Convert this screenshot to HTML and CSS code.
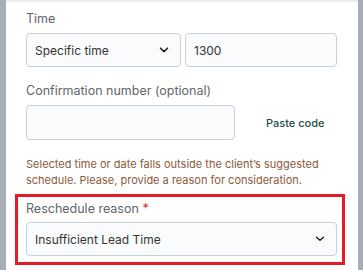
FILE: index.html
```html
<!DOCTYPE html>
<html lang="en">
<head>
    <meta charset="UTF-8">
    <meta name="viewport" content="width=device-width, initial-scale=1.0">
    <title>Reschedule</title>
    <link rel="stylesheet" href="styles.css">
</head>
<body>

<div class="panel">
    <div class="field">
        <label class="label">Time</label>
        <div class="row">
            <div class="select">
                <span>Specific time</span>
                <svg class="chevron" width="10" height="6" viewBox="0 0 10 6"><path d="M1.5 1.2 L5 4.6 L8.5 1.2" fill="none" stroke="#222" stroke-width="1.6" stroke-linecap="round" stroke-linejoin="round"/></svg>
            </div>
            <div class="input">1300</div>
        </div>
    </div>

    <div class="field">
        <label class="label">Confirmation number (optional)</label>
        <div class="row">
            <div class="input code"></div>
            <a class="paste" href="#">Paste code</a>
        </div>
    </div>

    <p class="warning">Selected time or date falls outside the client’s suggested schedule. Please, provide a reason for consideration.</p>

    <div class="highlight">
        <label class="label">Reschedule reason <span class="req">*</span></label>
        <div class="select wide">
            <span>Insufficient Lead Time</span>
            <svg class="chevron" width="10" height="6" viewBox="0 0 10 6"><path d="M1.5 1.2 L5 4.2 L8.5 1.2" fill="none" stroke="#222" stroke-width="1.5" stroke-linecap="round" stroke-linejoin="round"/></svg>
        </div>
    </div>
</div>

</body>
</html>
```

FILE: styles.css
```css
body {
    margin: 0;
    padding: 0;
    background-color: #a7aeb6;
    font-family: Inter, "Noto Sans", sans-serif;
}

.panel {
    margin: 0 5px 0 6px;
    height: 268px;
    background-color: #fff;
    border-top: 2px solid #ececec;
    padding: 9px 21px 0 20px;
    overflow: hidden;
}

.field {
    margin-bottom: 16px;
}

.label {
    display: block;
    font-size: 12.5px;
    line-height: 16px;
    color: #60656c;
    margin-bottom: 6px;
}

.row {
    display: flex;
    align-items: center;
    gap: 4px;
}

.select,
.input {
    box-sizing: border-box;
    height: 34px;
    border: 1px solid #c7d1dc;
    border-radius: 4px;
    background-color: #fafbfd;
    font-size: 12px;
    color: #333;
    display: flex;
    align-items: center;
    padding: 0 8px;
}

.select {
    flex: 1;
    justify-content: space-between;
    padding-right: 11px;
}

.input {
    flex: 1;
}

.input.code {
    flex: none;
    width: 209px;
    height: 35px;
}

.paste {
    margin-left: 27px;
    font-size: 11px;
    font-weight: 500;
    color: #244c49;
    text-decoration: none;
}

.warning {
    margin: 0 0 6px;
    font-size: 11px;
    line-height: 16px;
    color: #8a5a3b;
}

.highlight {
    margin: 0 -8px 0 -11px;
    padding: 4px 5px 6px 8px;
    border: 3px solid #e41c24;
}

.highlight .label {
    line-height: 15px;
    margin-bottom: 6px;
}

.req {
    color: #d9342b;
}

.select.wide {
    padding-right: 11px;
}
```
